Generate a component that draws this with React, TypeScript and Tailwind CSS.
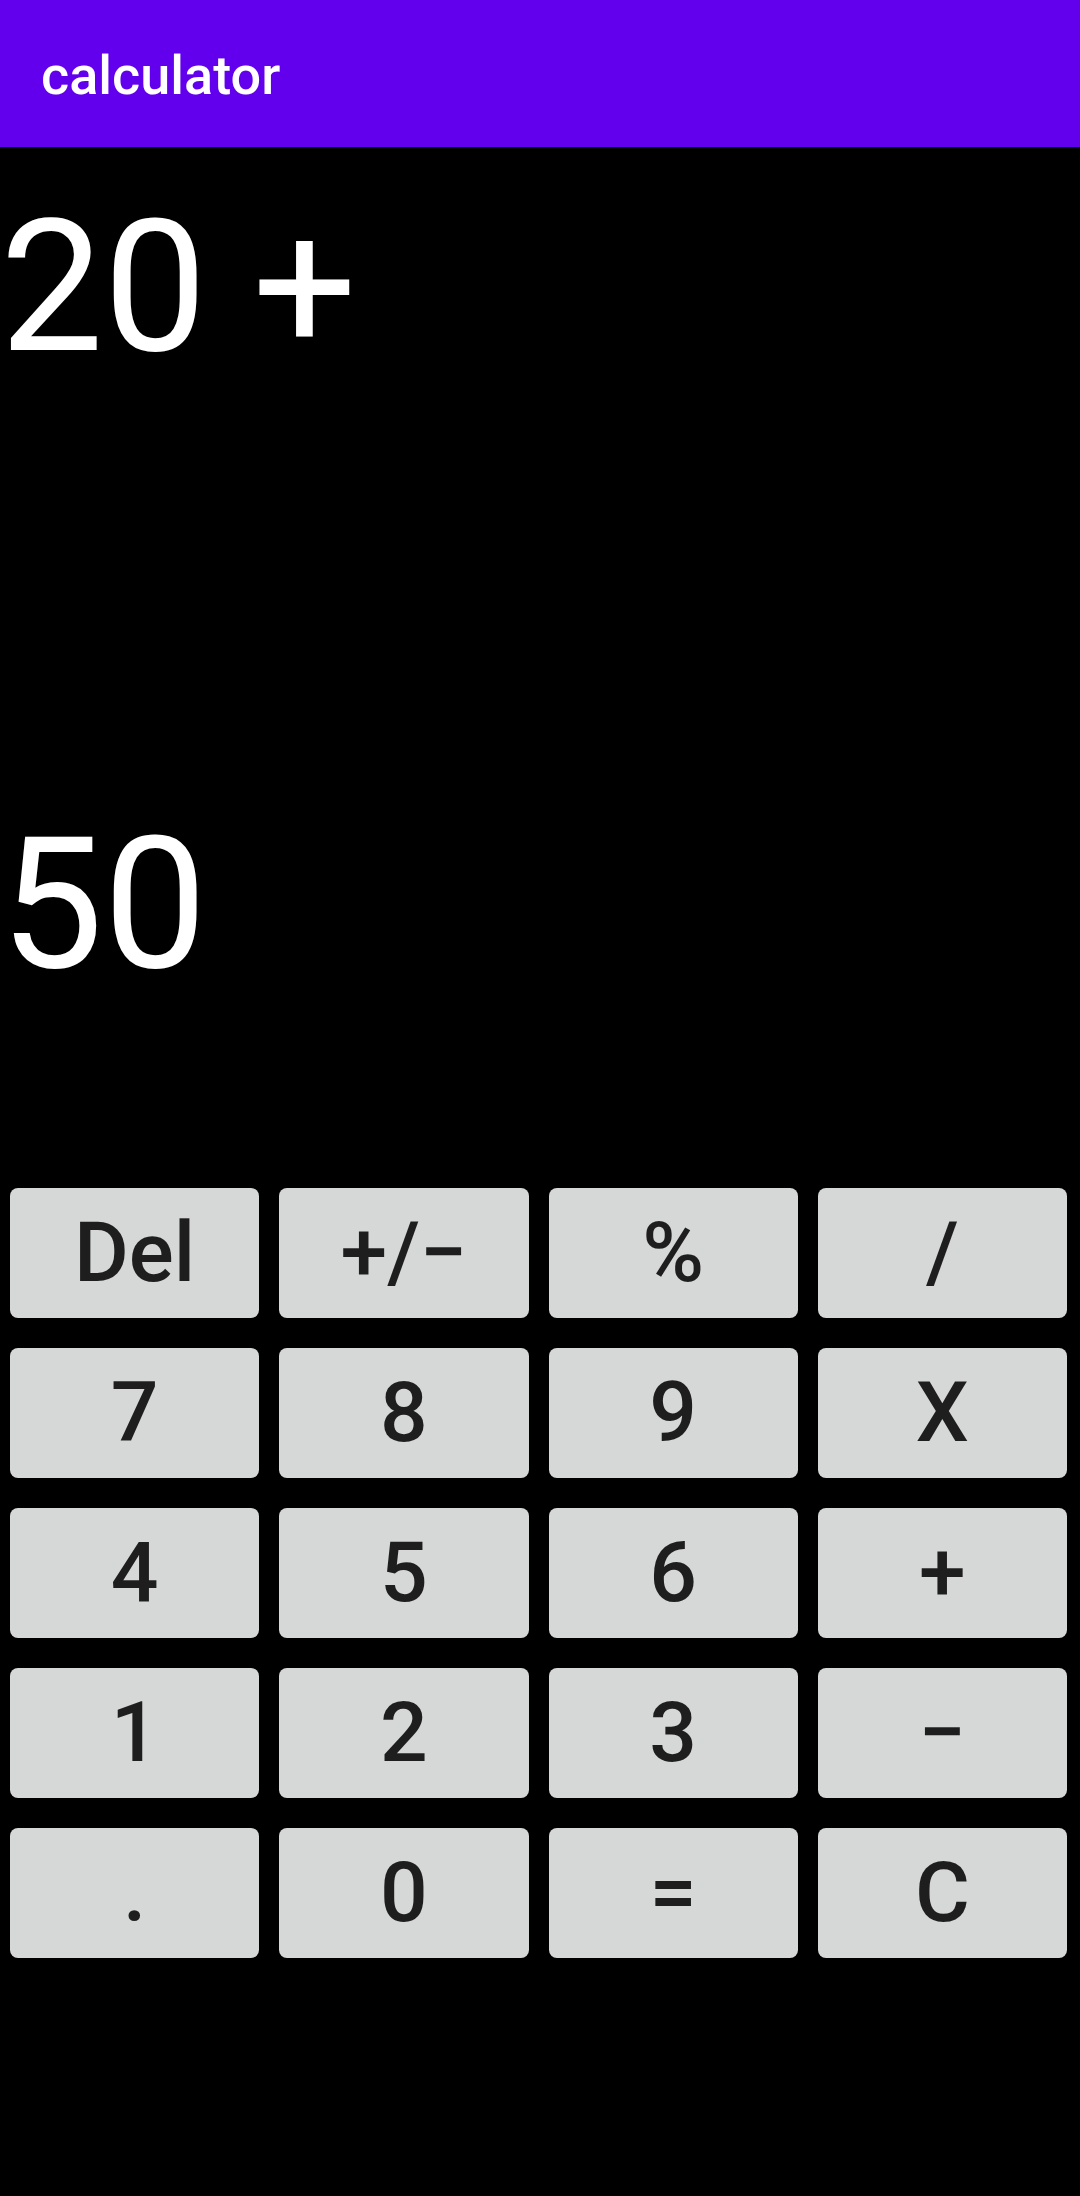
import React from 'react'

const rows: string[][] = [
  ['Del', '+/\u2212', '%', '/'],
  ['7', '8', '9', 'X'],
  ['4', '5', '6', '+'],
  ['1', '2', '3', '\u2212'],
  ['.', '0', '=', 'C'],
]

function Key({ label }: { label: string }) {
  return (
    <button className="flex-1 h-[130px] rounded-[8px] bg-[#d6d7d7] text-[#1e1e1e] text-[84px] leading-[98px] font-medium flex items-center justify-center">
      {label}
    </button>
  )
}

export default function App() {
  return (
    <div className="w-[1080px] min-h-[2196px] bg-black font-['Roboto',sans-serif]">
      <div className="h-[147px] bg-[#6200ee] flex items-center pl-[41px]">
        <p className="text-white text-[54px] leading-[62px] font-medium pt-[5px]">calculator</p>
      </div>

      {/* display: expression and result */}
      <div className="text-white text-[184px] leading-[216px]">
        <p className="mt-[32px]">20 +</p>
        <p className="mt-[401px]">50</p>
      </div>

      <div className="mt-[176px] pl-[10px] pr-[13px] flex flex-col gap-[30px]">
        {rows.map((row, i) => (
          <div key={i} className="flex gap-[20px]">
            {row.map((k) => (
              <Key key={k} label={k} />
            ))}
          </div>
        ))}
      </div>
    </div>
  )
}
